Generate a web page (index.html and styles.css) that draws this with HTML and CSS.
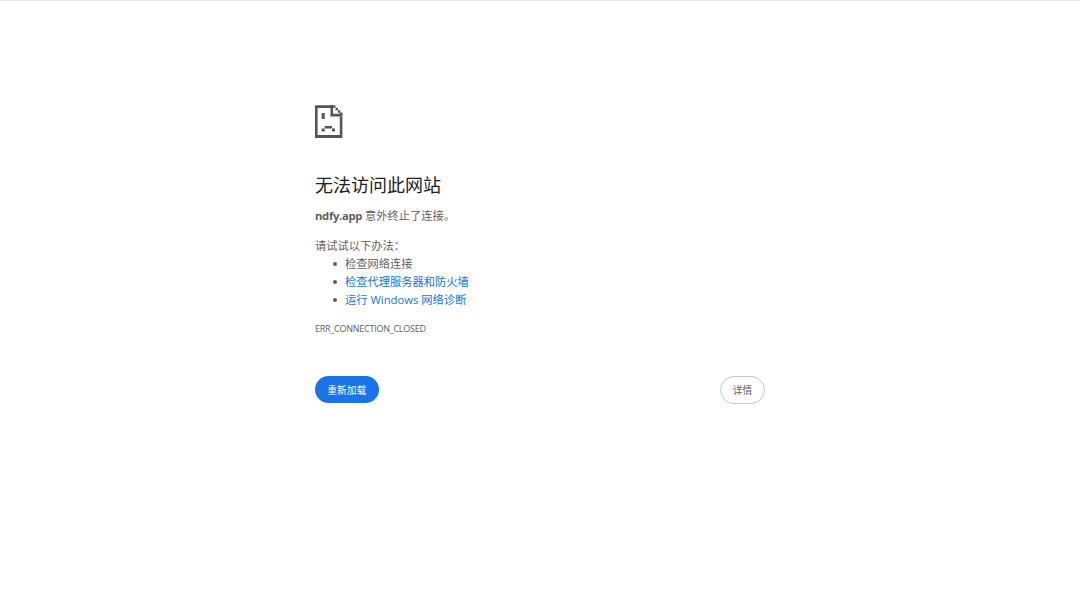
FILE: index.html
```html
<!DOCTYPE html>
<html lang="zh-CN">
<head>
  <meta charset="UTF-8" />
  <title>ndfy.app</title>
  <link rel="stylesheet" href="styles.css">
</head>
<body>
  <div class="top-line"></div>
  <div class="wrapper">
    <svg class="sad-icon" width="28" height="33" viewBox="0 0 28 33" fill="#555">
      <path d="M0 .3H16V3H2.6V30H24.8V11.5H27.4V33H0Z"/>
      <path d="M15.5 0H18V8.7H27.4V11.5H15.5Z"/>
      <rect x="18" y="0.3" width="2.5" height="2.5"/>
      <rect x="20.5" y="2.8" width="2.5" height="2.5"/>
      <rect x="23" y="5.3" width="2.2" height="2.5"/>
      <rect x="25" y="7.5" width="2.4" height="2.5"/>
      <rect x="6.7" y="8" width="3" height="6"/>
      <rect x="6.7" y="23.5" width="3" height="3"/>
      <rect x="9.7" y="21" width="7.3" height="2.5"/>
      <rect x="17" y="23.5" width="3" height="3"/>
    </svg>
    <h1 class="main-title">无法访问此网站</h1>
    <p class="summary"><strong>ndfy.app</strong> 意外终止了连接。</p>
    <div class="suggestions">
      <p>请试试以下办法：</p>
      <ul>
        <li>检查网络连接</li>
        <li><a href="#">检查代理服务器和防火墙</a></li>
        <li><a href="#">运行 Windows 网络诊断</a></li>
      </ul>
    </div>
    <div class="error-code">ERR_CONNECTION_CLOSED</div>
    <div class="buttons">
      <button class="reload-button">重新加载</button>
      <button class="details-button">详情</button>
    </div>
  </div>
</body>
</html>
```

FILE: styles.css
```css
body {
  margin: 0;
  background-color: #fff;
  color: #5f5f5f;
  font-family: "Open Sans", "Noto Sans CJK SC", sans-serif;
  font-size: 11.25px;
  line-height: 18px;
}
.top-line {
  height: 1px;
  background-color: #e4eaec;
}
.wrapper {
  width: 450px;
  margin: 0 auto;
  padding-top: 104px;
}
.sad-icon {
  display: block;
}
.main-title {
  margin: 34px 0 0;
  font-size: 18px;
  line-height: 27px;
  font-weight: 400;
  color: #202124;
}
.summary {
  margin: 8px 0 0;
}
.summary strong {
  font-weight: 700;
  letter-spacing: -0.3px;
}
.suggestions {
  margin-top: 12px;
}
.suggestions p {
  margin: 0;
}
.suggestions ul {
  margin: 0;
  padding-left: 30px;
  list-style: none;
}
.suggestions li {
  position: relative;
}
.suggestions li::before {
  content: "";
  position: absolute;
  left: -12px;
  top: 7px;
  width: 4px;
  height: 4px;
  border-radius: 50%;
  background-color: #5f5f5f;
}
.suggestions a {
  color: #1a73e8;
  text-decoration: none;
}
.error-code {
  margin-top: 13px;
  font-size: 9px;
  line-height: 14px;
  letter-spacing: -0.25px;
  color: #5f5f5f;
}
.buttons {
  display: flex;
  justify-content: space-between;
  align-items: flex-start;
  margin-top: 40px;
}
.buttons button {
  font-family: "Noto Sans CJK SC", sans-serif;
  font-size: 9.75px;
  border-radius: 14px;
  cursor: pointer;
}
.reload-button {
  width: 63.5px;
  height: 27px;
  border: none;
  background-color: #1a73e8;
  color: #fff;
}
.details-button {
  width: 45px;
  height: 28px;
  border: 1px solid #c9c6c4;
  background-color: #fff;
  color: #5f5f5f;
}
```
